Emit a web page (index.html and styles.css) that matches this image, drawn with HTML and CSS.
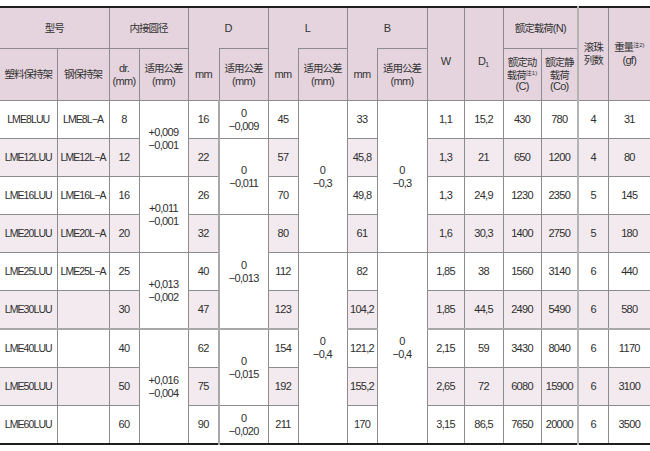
FILE: index.html
```html
<!DOCTYPE html>
<html lang="zh">
<head>
<meta charset="utf-8">
<title>LME</title>
<link rel="stylesheet" href="styles.css">
</head>
<body>
<table class="spec">
<colgroup>
<col class="w57"><col class="w52"><col class="w30"><col class="w49">
<col class="w31"><col class="w49"><col class="w30"><col class="w49">
<col class="w30"><col class="w50"><col class="w37"><col class="w39">
<col class="w38"><col class="w37"><col class="w30"><col class="w42">
</colgroup>
<thead>
<tr class="h1">
<th colspan="2"><span class="zh">型号</span></th>
<th colspan="2"><span class="zh">内接圆径</span></th>
<th colspan="2" class="open">D</th>
<th colspan="2" class="open">L</th>
<th colspan="2" class="open">B</th>
<th rowspan="2" class="low">W</th>
<th rowspan="2" class="low">D<sub>1</sub></th>
<th colspan="2"><span class="zh">额定载荷</span>(N)</th>
<th rowspan="2" class="balls"><span class="zh">滚珠<br>列数</span></th>
<th rowspan="2"><span class="zh">重量</span><sup>注2)</sup><br>(gf)</th>
</tr>
<tr class="h2">
<th><span class="zh">塑料保持架</span></th>
<th><span class="zh">钢保持架</span></th>
<th>dr.<br>(mm)</th>
<th><span class="zh">适用公差</span><br>(mm)</th>
<th class="mm">mm</th>
<th class="dt"><span class="zh">适用公差</span><br>(mm)</th>
<th class="mm">mm</th>
<th><span class="zh">适用公差</span><br>(mm)</th>
<th class="mm">mm</th>
<th><span class="zh">适用公差</span><br>(mm)</th>
<th class="tall"><span class="zh">额定动<br>载荷</span><sup>注1)</sup><br>(C)</th>
<th class="tall"><span class="zh">额定静<br>载荷</span><br>(Co)</th>
</tr>
</thead>
<tbody>
<tr>
<td class="model">LME8LUU</td><td class="model">LME8L−A</td><td>8</td>
<td rowspan="2" class="tol">+0,009<br>−0,001</td>
<td>16</td>
<td class="tol dt">0<br>−0,009</td>
<td>45</td>
<td rowspan="4" class="tol">0<br>−0,3</td>
<td>33</td>
<td rowspan="4" class="tol">0<br>−0,3</td>
<td>1,1</td><td>15,2</td><td>430</td><td>780</td><td class="balls">4</td><td>31</td>
</tr>
<tr class="alt">
<td class="model">LME12LUU</td><td class="model">LME12L−A</td><td>12</td>
<td>22</td>
<td rowspan="2" class="tol dt">0<br>−0,011</td>
<td>57</td>
<td>45,8</td>
<td>1,3</td><td>21</td><td>650</td><td>1200</td><td class="balls">4</td><td>80</td>
</tr>
<tr>
<td class="model">LME16LUU</td><td class="model">LME16L−A</td><td>16</td>
<td rowspan="2" class="tol">+0,011<br>−0,001</td>
<td>26</td>
<td>70</td>
<td>49,8</td>
<td>1,3</td><td>24,9</td><td>1230</td><td>2350</td><td class="balls">5</td><td>145</td>
</tr>
<tr class="alt">
<td class="model">LME20LUU</td><td class="model">LME20L−A</td><td>20</td>
<td>32</td>
<td rowspan="3" class="tol dt">0<br>−0,013</td>
<td>80</td>
<td>61</td>
<td>1,6</td><td>30,3</td><td>1400</td><td>2750</td><td class="balls">5</td><td>180</td>
</tr>
<tr>
<td class="model">LME25LUU</td><td class="model">LME25L−A</td><td>25</td>
<td rowspan="2" class="tol">+0,013<br>−0,002</td>
<td>40</td>
<td>112</td>
<td rowspan="5" class="tol">0<br>−0,4</td>
<td>82</td>
<td rowspan="5" class="tol">0<br>−0,4</td>
<td>1,85</td><td>38</td><td>1560</td><td>3140</td><td class="balls">6</td><td>440</td>
</tr>
<tr class="alt">
<td class="model">LME30LUU</td><td></td><td>30</td>
<td>47</td>
<td>123</td>
<td>104,2</td>
<td>1,85</td><td>44,5</td><td>2490</td><td>5490</td><td class="balls">6</td><td>580</td>
</tr>
<tr class="sep">
<td class="model">LME40LUU</td><td></td><td>40</td>
<td rowspan="3" class="tol">+0,016<br>−0,004</td>
<td>62</td>
<td rowspan="2" class="tol dt">0<br>−0,015</td>
<td>154</td>
<td>121,2</td>
<td>2,15</td><td>59</td><td>3430</td><td>8040</td><td class="balls">6</td><td>1170</td>
</tr>
<tr class="alt">
<td class="model">LME50LUU</td><td></td><td>50</td>
<td>75</td>
<td>192</td>
<td>155,2</td>
<td>2,65</td><td>72</td><td>6080</td><td>15900</td><td class="balls">6</td><td>3100</td>
</tr>
<tr>
<td class="model">LME60LUU</td><td></td><td>60</td>
<td>90</td>
<td class="tol dt">0<br>−0,020</td>
<td>211</td>
<td>170</td>
<td>3,15</td><td>86,5</td><td>7650</td><td>20000</td><td class="balls">6</td><td>3500</td>
</tr>
</tbody>
</table>
</body>
</html>
```
FILE: styles.css
```css
html, body {
  margin: 0;
  background: #ffffff;
}
body {
  padding-top: 6px;
  font-family: "Liberation Sans", "Noto Sans CJK SC", sans-serif;
  color: #333333;
}
.spec {
  width: 650px;
  border-collapse: collapse;
  table-layout: fixed;
  font-size: 11px;
  letter-spacing: -0.7px;
  border-top: 2px solid #1e1e1e;
  border-bottom: 2px solid #1e1e1e;
}
.w57 { width: 57px; }
.w52 { width: 52px; }
.w30 { width: 30px; }
.w31 { width: 31px; }
.w49 { width: 49px; }
.w50 { width: 50px; }
.w37 { width: 37px; }
.w38 { width: 38px; }
.w39 { width: 39px; }
.w42 { width: 42px; }

.spec th,
.spec td {
  border: 1px solid #8c8c8c;
  padding: 0;
  text-align: center;
  vertical-align: middle;
  line-height: 13px;
  font-weight: normal;
  white-space: nowrap;
}
.spec th {
  background: #e5d4de;
  color: #333333;
}
.spec tr > :first-child { border-left: none; }
.spec tr > :last-child { border-right: none; }

.h1 th { height: 40px; }
.h2 th { height: 51px; }
.spec th.tall { line-height: 11.5px; }
.spec th.open { border-bottom: none; }
.spec th.mm { border-top: none; }
.spec th.low { padding-top: 14px; }

.spec td {
  height: 37px;
  background: #ffffff;
  color: #2e2e2e;
}
.spec td.model {
  font-size: 10.5px;
  letter-spacing: -0.9px;
}
.spec tr.alt td { background: #f3eaef; }
.spec tr.alt td.tol { background: #ffffff; }
.spec td.tol { line-height: 13px; }

.spec .balls { border-left: 2px solid #b4b4b4; }
.spec td.dt { border-left: 2px solid #a8a8a8; }
.spec tr.sep td { border-top: 2px solid #a8a8a8; }

.zh {
  font-size: 10.5px;
  letter-spacing: -1px;
  line-height: 12px;
}
sup {
  font-size: 6px;
  letter-spacing: 0;
  vertical-align: 4px;
  line-height: 0;
}
sub {
  font-size: 7px;
  letter-spacing: 0;
  vertical-align: -2px;
  line-height: 0;
}
```
